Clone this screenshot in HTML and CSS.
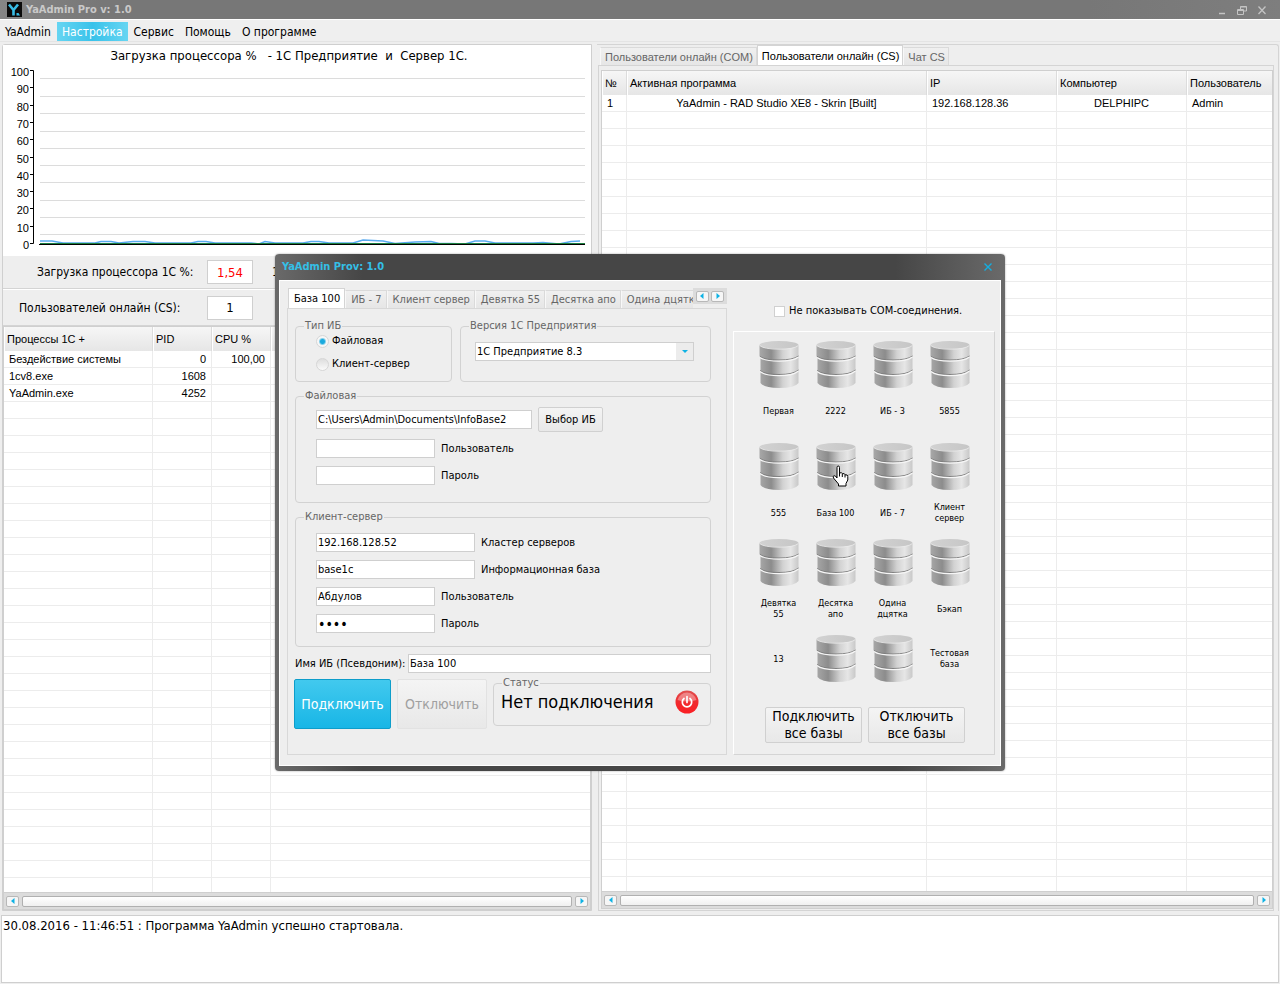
FILE: index.html
```html
<!DOCTYPE html>
<html lang="ru">
<head>
    <meta charset="UTF-8">
    <meta name="viewport" content="width=device-width, initial-scale=1.0">
    <title>YaAdmin Pro</title>
    <link rel="stylesheet" href="styles.css">
</head>
<body>
    <!-- Общие иконки -->
    <svg class="sprite" width="0" height="0" aria-hidden="true">
        <defs>
            <linearGradient id="metal" x1="0" x2="1" y1="0" y2="0">
                <stop offset="0" stop-color="#a8a8a8"/>
                <stop offset="0.3" stop-color="#8c8c8c"/>
                <stop offset="0.6" stop-color="#d2d2d2"/>
                <stop offset="0.8" stop-color="#e6e6e6"/>
                <stop offset="1" stop-color="#c8c8c8"/>
            </linearGradient>
            <linearGradient id="lid" x1="0" x2="1" y1="0" y2="0">
                <stop offset="0" stop-color="#d2d2d2"/>
                <stop offset="1" stop-color="#c6c6c6"/>
            </linearGradient>
            <linearGradient id="red" x1="0" x2="0" y1="0" y2="1">
                <stop offset="0" stop-color="#e05050"/>
                <stop offset="0.5" stop-color="#f02a2e"/>
                <stop offset="1" stop-color="#fb1f24"/>
            </linearGradient>
        </defs>
        <symbol id="db" viewBox="0 0 40 50">
            <path d="M0.500 5 H39.500 V43 Q36 48 20 48 Q5 48 1.500 43 V18 L0.500 16 Z" fill="url(#metal)"/>
            <path d="M1 16.500 Q6 20 20 20 Q34 20 39.500 16 M1 30.500 Q6 34.500 20 34.500 Q34 34.500 39.500 30" fill="none" stroke="#7c7c7c" stroke-width="0.900"/>
            <path d="M1 17.500 Q6 21.200 20 21.200 Q34 21.200 39.500 17 M1 31.500 Q6 35.700 20 35.700 Q34 35.700 39.500 31" fill="none" stroke="#f6f6f6" stroke-width="1.200"/>
            <ellipse cx="20" cy="5" rx="19.500" ry="4" fill="url(#lid)"/>
            <path d="M0.500 5.500 Q5 9.200 20 9.200 Q35 9.200 39.500 5.500" fill="none" stroke="#ececec" stroke-width="0.800"/>
        </symbol>
        <symbol id="left" viewBox="0 0 6 8"><path d="M4.500 1 V7 L1 4 Z" fill="#0eb2e4"/></symbol>
        <symbol id="right" viewBox="0 0 6 8"><path d="M1.500 1 V7 L5 4 Z" fill="#0eb2e4"/></symbol>
    </svg>

    <header class="titlebar">
        <svg class="logo" viewBox="0 0 15 15">
            <rect width="15" height="15" fill="#0b0b0b"/>
            <path d="M2 2.500 L6.500 8 L11 2.500 M6.500 8 V13.500" fill="none" stroke="#39bde6" stroke-width="2.600"/>
            <path d="M9.500 11 h2 l1.500 2.500 h-3.500 z" fill="#39bde6"/>
        </svg>
        <h1>YaAdmin Pro v: 1.0</h1>
        <div class="win-buttons">
            <button aria-label="Свернуть"><svg viewBox="0 0 10 10"><path d="M2 8.500 H8" stroke="#c4c4c4" stroke-width="1.500"/></svg></button>
            <button aria-label="Восстановить"><svg viewBox="0 0 10 10"><path d="M3.500 4 V1.500 H9.500 V6 H7 M3.500 2 H9.500 M0.500 4.500 H6.500 V9.500 H0.500 Z M0.500 5.500 H6.500" fill="none" stroke="#c4c4c4"/></svg></button>
            <button aria-label="Закрыть"><svg viewBox="0 0 10 10"><path d="M1.500 1.500 L8.500 9 M8.500 1.500 L1.500 9" stroke="#c4c4c4" stroke-width="1.300"/></svg></button>
        </div>
    </header>

    <nav class="menu">
        <button>YaAdmin</button>
        <button class="active">Настройка</button>
        <button>Сервис</button>
        <button>Помощь</button>
        <button>О программе</button>
    </nav>

    <main class="workspace">
        <section class="left">
            <div class="chart">
                <svg viewBox="0 0 588 208" preserveAspectRatio="none">
                    <text x="286" y="14" id="chart-title">Загрузка процессора %&#160; &#160;- 1С Предприятие&#160; и&#160; Сервер 1С.</text>
                    <g class="scale">
                        <text x="26" y="30">100</text>
                        <text x="26" y="47">90</text>
                        <text x="26" y="65">80</text>
                        <text x="26" y="82">70</text>
                        <text x="26" y="99">60</text>
                        <text x="26" y="117">50</text>
                        <text x="26" y="134">40</text>
                        <text x="26" y="151">30</text>
                        <text x="26" y="168">20</text>
                        <text x="26" y="186">10</text>
                        <text x="26" y="203">0</text>
                    </g>
                    <path d="M27 24.500 H30.500 V197.500 H27 M27 41.500 H30 M27 59.500 H30 M27 76.500 H30 M27 93.500 H30 M27 111.500 H30 M27 128.500 H30 M27 145.500 H30 M27 162.500 H30 M27 180.500 H30" fill="none" stroke="#000"/>
                    <path d="M37 32.500 H582 M37 50.500 H582 M37 67.500 H582 M37 85.500 H582 M37 102.500 H582 M37 119.500 H582 M37 136.500 H582 M37 154.500 H582 M37 171.500 H582 M37 188.500 H582" stroke="#dcdcdc"/>
                    <path d="M37 195 L49 195 L60 197 H92 L98 195.500 H108 L116 197 L130 195.500 H142 L152 197 H188 L195 195.500 H203 L212 197 H248 L256 198 L262 195.500 L272 197 H300 L308 195.500 H316 L326 197 H350 L360 194 L380 195 L392 197.500 L412 196 L428 195.500 L436 197.500 H448 L462 198 L472 195 H482 L492 197 H530 L540 196.500 L556 198 L568 195.500 L577 195" fill="none" stroke="#58aaf0" stroke-width="1.500"/>
                    <path d="M37 197.500 H582" stroke="#1c8040"/>
                    <path d="M36 198.500 H582" stroke="#000"/>
                </svg>
            </div>
            <div class="meter">
                <label for="cpu">Загрузка процессора 1С %:</label>
                <input id="cpu" class="hot" value="1,54" readonly>
                <span>1</span>
            </div>
            <div class="meter users">
                <label for="online">Пользователей онлайн (CS):</label>
                <input id="online" value="1" readonly>
            </div>
            <div class="grid-box">
                <table class="grid">
                    <colgroup><col class="c-proc"><col class="c-num"><col class="c-num"><col></colgroup>
                    <thead><tr><th>Процессы 1С +</th><th>PID</th><th>CPU %</th><th></th></tr></thead>
                    <tbody>
                        <tr><td>Бездействие системы</td><td class="num">0</td><td class="num">100,00</td><td></td></tr>
                        <tr><td>1cv8.exe</td><td class="num">1608</td><td></td><td></td></tr>
                        <tr><td>YaAdmin.exe</td><td class="num">4252</td><td></td><td></td></tr>
                        <tr class="filler"><td></td><td></td><td></td><td></td></tr>
                    </tbody>
                </table>
                <div class="scrollbar">
                    <button aria-label="Влево"><svg><use href="#left"/></svg></button>
                    <div class="thumb"></div>
                    <button aria-label="Вправо"><svg><use href="#right"/></svg></button>
                </div>
            </div>
        </section>

        <section class="right">
            <div class="tabs">
                <button>Пользователи онлайн (COM)</button>
                <button class="active">Пользователи онлайн (CS)</button>
                <button>Чат CS</button>
            </div>
            <div class="tab-page">
                <div class="grid-box">
                    <table class="grid">
                        <colgroup><col class="c-no"><col class="c-prog"><col class="c-ip"><col class="c-ip"><col></colgroup>
                        <thead><tr><th>№</th><th>Активная программа</th><th>IP</th><th>Компьютер</th><th>Пользователь</th></tr></thead>
                        <tbody>
                            <tr><td>1</td><td class="mid">YaAdmin - RAD Studio XE8 - Skrin [Built]</td><td>192.168.128.36</td><td class="mid">DELPHIPC</td><td>Admin</td></tr>
                            <tr class="filler"><td></td><td></td><td></td><td></td><td></td></tr>
                        </tbody>
                    </table>
                    <div class="scrollbar">
                        <button aria-label="Влево"><svg><use href="#left"/></svg></button>
                        <div class="thumb"></div>
                        <button aria-label="Вправо"><svg><use href="#right"/></svg></button>
                    </div>
                </div>
            </div>
        </section>
    </main>

    <footer class="log">30.08.2016 - 11:46:51 : Программа YaAdmin успешно стартовала.</footer>

    <!-- Окно настройки баз -->
    <div class="dialog" role="dialog" aria-labelledby="dialog-title">
        <div class="dialog-title">
            <h2 id="dialog-title">YaAdmin Prov: 1.0</h2>
            <button aria-label="Закрыть"><svg viewBox="0 0 10 10"><path d="M1.500 1.500 L8.500 8.500 M8.500 1.500 L1.500 8.500" stroke="#14aee0" stroke-width="1.400"/></svg></button>
        </div>
        <div class="dialog-body">
            <div class="settings">
                <div class="base-tabs">
                    <div class="tabs">
                        <button class="active">База 100</button>
                        <button>ИБ - 7</button>
                        <button>Клиент сервер</button>
                        <button>Девятка 55</button>
                        <button>Десятка апо</button>
                        <button>Одина дцятка</button>
                    </div>
                    <div class="tab-nav">
                        <button aria-label="Назад"><svg><use href="#left"/></svg></button>
                        <button aria-label="Вперёд"><svg><use href="#right"/></svg></button>
                    </div>
                </div>
                <form class="pane" onsubmit="return false">
                    <div class="top-groups">
                        <fieldset class="kind">
                            <legend>Тип ИБ</legend>
                            <label><input type="radio" name="kind" checked> Файловая</label>
                            <label><input type="radio" name="kind"> Клиент-сервер</label>
                        </fieldset>
                        <fieldset class="version">
                            <legend>Версия 1С Предприятия</legend>
                            <div class="combo">
                                <select aria-label="Версия 1С Предприятия"><option>1С Предприятие 8.3</option></select>
                            </div>
                        </fieldset>
                    </div>
                    <fieldset class="file-group">
                        <legend>Файловая</legend>
                        <div class="field path">
                            <input class="box wide" aria-label="Путь к базе" value="C:\Users\Admin\Documents\InfoBase2">
                            <button class="btn">Выбор ИБ</button>
                        </div>
                        <div class="field"><input class="box short" id="f-user"><label for="f-user">Пользователь</label></div>
                        <div class="field"><input class="box short" id="f-pass" type="password"><label for="f-pass">Пароль</label></div>
                    </fieldset>
                    <fieldset class="server-group">
                        <legend>Клиент-сервер</legend>
                        <div class="field"><input class="box" id="s-host" value="192.168.128.52"><label for="s-host">Кластер серверов</label></div>
                        <div class="field"><input class="box" id="s-base" value="base1c"><label for="s-base">Информационная база</label></div>
                        <div class="field"><input class="box short" id="s-user" value="Абдулов"><label for="s-user">Пользователь</label></div>
                        <div class="field"><input class="box short" id="s-pass" type="password" value="1234"><label for="s-pass">Пароль</label></div>
                    </fieldset>
                    <div class="alias">
                        <label for="alias">Имя ИБ (Псевдоним):</label>
                        <input class="box" id="alias" value="База 100">
                    </div>
                    <div class="actions">
                        <button class="btn connect">Подключить</button>
                        <button class="btn disconnect" disabled>Отключить</button>
                        <fieldset class="status">
                            <legend>Статус</legend>
                            <span>Нет подключения</span>
                            <svg viewBox="0 0 24 24">
                                <circle cx="12" cy="12" r="11.500" fill="url(#red)"/>
                                <path d="M2.500 10 A9.800 9.800 0 0 1 21.500 10 Q12 13 2.500 10 Z" fill="#fff" opacity="0.350"/>
                                <path d="M9 8.500 A4.700 4.700 0 1 0 15 8.500 M12 6.500 V12.500" fill="none" stroke="#fff" stroke-width="1.700" stroke-linecap="round"/>
                            </svg>
                        </fieldset>
                    </div>
                </form>
            </div>

            <div class="bases">
                <label class="no-com"><input type="checkbox"> Не показывать COM-соединения.</label>
                <div class="bases-box">
                    <div class="base-list">
                        <div class="base"><svg><use href="#db"/></svg><span>Первая</span></div>
                        <div class="base"><svg><use href="#db"/></svg><span>2222</span></div>
                        <div class="base"><svg><use href="#db"/></svg><span>ИБ - 3</span></div>
                        <div class="base"><svg><use href="#db"/></svg><span>5855</span></div>
                        <div class="base"><svg><use href="#db"/></svg><span>555</span></div>
                        <div class="base">
                            <svg><use href="#db"/></svg><span>База 100</span>
                            <svg class="hand" viewBox="0 0 17 22">
                                <path d="M5 13 V2.500 Q5 1 6.300 1 Q7.500 1 7.500 2.500 V8 Q10 7 10.300 8.700 Q12.800 8 13 9.800 Q15.800 9.300 15.800 11.500 V15 L14 18.500 V21 H6.500 V19 L1.500 13 Q0.500 11 2.200 10.700 Q3.500 10.700 5 13 Z" fill="#fff" stroke="#000"/>
                                <path d="M7.500 8 V11.500 M10.300 9 V12 M13 10 V12.500" stroke="#000"/>
                            </svg>
                        </div>
                        <div class="base"><svg><use href="#db"/></svg><span>ИБ - 7</span></div>
                        <div class="base"><svg><use href="#db"/></svg><span>Клиент сервер</span></div>
                        <div class="base"><svg><use href="#db"/></svg><span>Девятка 55</span></div>
                        <div class="base"><svg><use href="#db"/></svg><span>Десятка апо</span></div>
                        <div class="base"><svg><use href="#db"/></svg><span>Одина дцятка</span></div>
                        <div class="base"><svg><use href="#db"/></svg><span>Бэкап</span></div>
                        <div class="base empty"><span>13</span></div>
                        <div class="base"><svg><use href="#db"/></svg></div>
                        <div class="base"><svg><use href="#db"/></svg></div>
                        <div class="base empty"><span>Тестовая база</span></div>
                    </div>
                    <div class="all-buttons">
                        <button class="btn">Подключить<br>все базы</button>
                        <button class="btn">Отключить<br>все базы</button>
                    </div>
                </div>
            </div>
        </div>
    </div>
</body>
</html>
```
FILE: styles.css
```css
* {
    box-sizing: border-box;
}
body {
    margin: 0;
    height: 100vh;
    display: flex;
    flex-direction: column;
    background: #eee;
    color: #000;
    font-family: "DejaVu Sans Condensed", "Noto Sans", sans-serif;
    font-size: 11px;
    line-height: 14px;
}
button, input, select {
    font: inherit;
    color: inherit;
    margin: 0;
    padding: 0;
    border: none;
    background: none;
}
svg {
    display: block;
}
.sprite {
    position: absolute;
}

/* Заголовок окна */
.titlebar {
    height: 19px;
    flex: none;
    display: flex;
    align-items: center;
    gap: 4px;
    padding: 0 13px 0 7px;
    background: linear-gradient(90deg, #868686, #777 8%, #777 85%, #7e7e7e);
}
.titlebar .logo {
    width: 15px;
    height: 15px;
}
.titlebar h1 {
    margin: 0;
    font-size: 11px;
    color: #c9c9c9;
}
.win-buttons {
    margin-left: auto;
    display: flex;
    gap: 10px;
}
.win-buttons svg {
    width: 10px;
    height: 10px;
}

.menu {
    height: 23px;
    flex: none;
    display: flex;
    gap: 1px;
    padding-top: 2px;
    border-top: 1px solid #fff;
    border-bottom: 1px solid #e4e4e4;
    background: #efefef;
    font-size: 12px;
}
.menu button {
    padding: 0 5px;
}
.menu .active {
    color: #fff;
    background: linear-gradient(90deg, #66d5f2, #39c2ea 50%, #66d5f2);
}

.workspace {
    flex: 1;
    min-height: 0;
    display: flex;
    gap: 5px;
    padding: 2px 1px 4px 2px;
}
.left {
    width: 590px;
    flex: none;
    display: flex;
    flex-direction: column;
    border: 1px solid #cfcfcf;
    border-radius: 3px 0 0 0;
}
.chart {
    height: 210px;
    padding-top: 1px;
    background: #fff;
}
.chart svg {
    width: 100%;
    height: 208px;
}
#chart-title {
    font-size: 13px;
    text-anchor: middle;
}
.scale {
    font-family: "Liberation Sans", sans-serif;
    font-size: 11px;
    text-anchor: end;
}
.meter {
    height: 34px;
    display: flex;
    align-items: center;
    gap: 7px;
    padding-left: 34px;
    border-top: 1px solid #fff;
    border-bottom: 1px solid #d4d4d4;
    font-size: 12px;
    white-space: nowrap;
}
.meter label {
    width: 163px;
}
.meter input {
    width: 46px;
    height: 24px;
    border: 1px solid #cfcfcf;
    background: #fff;
    text-align: center;
    font-size: 13px;
}
.meter .hot {
    color: #f00;
}
.meter span {
    margin-left: 12px;
}
.users {
    height: 37px;
    padding-left: 16px;
    gap: 17px;
}
.users label {
    width: 171px;
}

/* Таблицы */
.grid-box {
    flex: 1;
    min-height: 0;
    display: flex;
    flex-direction: column;
    border: 1px solid #cfcfcf;
    background: #fff;
}
.grid {
    flex: 1;
    width: 100%;
    table-layout: fixed;
    border-collapse: separate;
    border-spacing: 0;
    font-family: "Liberation Sans", sans-serif;
}
.grid th {
    height: 24px;
    padding: 0 2px;
    text-align: left;
    font-weight: normal;
    white-space: nowrap;
    border-right: 1px solid #dcdcdc;
    border-left: 1px solid #fff;
    background: linear-gradient(#f6f6f6, #e6e6e6);
}
.grid td {
    height: 17px;
    padding: 1px 5px 0;
    line-height: 15px;
    white-space: nowrap;
    border-right: 1px solid #ececec;
    border-bottom: 1px solid #ececec;
}
.grid th:last-child, .grid td:last-child {
    border-right: none;
}
.grid .num {
    text-align: right;
}
.grid .mid {
    text-align: center;
}
.grid .filler td {
    height: auto;
    border-bottom: none;
    background: repeating-linear-gradient(#fff 0, #fff 16px, #ececec 16px, #ececec 17px);
}
.c-proc {
    width: 149px;
}
.c-num {
    width: 59px;
}
.c-no {
    width: 25px;
}
.c-prog {
    width: 300px;
}
.c-ip {
    width: 130px;
}

.scrollbar {
    height: 17px;
    display: flex;
    align-items: center;
    gap: 3px;
    padding: 0 2px;
    border-top: 1px solid #cfcfcf;
    background: #dcdcdc;
}
.scrollbar button, .tab-nav button {
    width: 13px;
    height: 11px;
    display: flex;
    align-items: center;
    justify-content: center;
    border: 1px solid #b8b8b8;
    border-radius: 2px;
    background: #f6f6f6;
}
.scrollbar svg, .tab-nav svg {
    width: 6px;
    height: 8px;
}
.thumb {
    flex: 1;
    height: 11px;
    border: 1px solid #b0b0b0;
    border-radius: 2px;
    background: linear-gradient(#fff, #f0f0f0);
}

/* Вкладки */
.tabs {
    display: flex;
    align-items: flex-end;
}
.tabs button {
    flex: none;
    height: 18px;
    padding: 0 4px 0 5px;
    white-space: nowrap;
    color: #666;
    border: 1px solid #dadada;
    border-left-color: #f8f8f8;
    border-bottom: none;
    background: linear-gradient(#f0f0f0, #e6e6e6);
}
.tabs .active {
    height: 20px;
    color: #000;
    border-color: #d4d4d4;
    background: #fff;
}
.right {
    flex: 1;
    min-width: 0;
    display: flex;
    flex-direction: column;
    padding: 0 4px 0 1px;
    border: 1px solid #d4d4d4;
    border-left: none;
    border-bottom: none;
    border-radius: 0 3px 0 0;
}
.right .tabs {
    padding-left: 2px;
    font-family: "Liberation Sans", sans-serif;
}
.right .tabs button {
    padding: 0 3px 0 4px;
}
.tab-page {
    flex: 1;
    min-height: 0;
    display: flex;
    padding: 4px 0 1px 2px;
    border: 1px solid #d4d4d4;
}

.log {
    height: 68px;
    flex: none;
    margin: 0 1px 1px;
    padding: 3px 1px;
    border: 1px solid #cfcfcf;
    background: #fff;
    font-size: 13px;
}

/* Диалог поверх главного окна */
.dialog {
    position: absolute;
    top: 254px;
    left: 50%;
    width: 730px;
    margin-left: -365px;
    padding: 0 4px 5px;
    border-radius: 4px;
    background: linear-gradient(90deg, #6a6a6a, #464646 12%, #464646 85%, #6a6a6a);
    box-shadow: 0 0 2px rgba(0, 0, 0, 0.4);
}
.dialog-title {
    height: 26px;
    display: flex;
    align-items: center;
    justify-content: space-between;
    padding: 0 8px 0 3px;
}
.dialog-title h2 {
    margin: 0;
    font-size: 11px;
    color: #34bfe6;
}
.dialog-title svg {
    width: 10px;
    height: 10px;
}
.dialog-body {
    display: flex;
    gap: 6px;
    padding: 7px 5px 10px 7px;
    border: 1px solid #fff;
    background: #eee;
}
.settings {
    width: 440px;
}
.base-tabs {
    display: flex;
    height: 20px;
    padding-left: 1px;
}
.base-tabs .tabs {
    flex: 1;
    min-width: 0;
    overflow: hidden;
}
.tab-nav {
    width: 34px;
    height: 16px;
    display: flex;
    align-items: center;
    justify-content: space-evenly;
    background: #dcdcdc;
}
.pane {
    display: flex;
    flex-direction: column;
    gap: 7px;
    padding: 10px 15px 25px 7px;
    border: 1px solid #d8d8d8;
}
fieldset {
    margin: 0;
    padding: 0;
    min-width: 0;
    border: 1px solid #d2d2d2;
    border-radius: 4px;
}
legend {
    margin-left: 8px;
    padding: 0 1px;
    color: #666;
}
.top-groups {
    display: flex;
    gap: 8px;
}
.kind {
    width: 157px;
    height: 63px;
}
.kind label {
    height: 16px;
    display: flex;
    align-items: center;
    gap: 3px;
    margin: 0 0 7px 20px;
}
.kind input {
    appearance: none;
    width: 13px;
    height: 13px;
    border: 1px solid #d6d6d6;
    border-radius: 50%;
    background: linear-gradient(#dedede, #fafafa);
}
.kind input:checked {
    background: radial-gradient(circle, #1aaade 0, #1aaade 2px, #f6f6f6 4px);
}
.version {
    flex: 1;
    padding-top: 9px;
}
.combo {
    position: relative;
    width: 219px;
    margin-left: 14px;
}
.combo select {
    appearance: none;
    display: block;
    width: 100%;
    height: 19px;
    padding-left: 1px;
    border: 1px solid #cfcfcf;
    border-radius: 0;
    background: linear-gradient(90deg, #fff 200px, #ececec 200px);
}
.combo::after {
    content: "";
    position: absolute;
    top: 8px;
    right: 6px;
    border: 3px solid transparent;
    border-top-color: #0eb2e4;
    border-bottom: none;
}
.box {
    width: 159px;
    height: 19px;
    padding: 0 1px;
    border: 1px solid #cfcfcf;
    background: #fff;
}
.box[type="password"] {
    font-size: 14px;
}
.short {
    width: 119px;
}
.wide {
    width: 216px;
}
.field {
    display: flex;
    align-items: center;
    gap: 6px;
    margin: 0 0 8px 20px;
}
.file-group {
    height: 114px;
    padding-top: 4px;
}
.path {
    margin-bottom: 7px;
}
.server-group {
    height: 137px;
    padding-top: 9px;
}
.btn {
    border: 1px solid #d0d0d0;
    border-radius: 2px;
    background: linear-gradient(#f4f4f4, #e8e8e8);
}
.path .btn {
    width: 65px;
    height: 25px;
}
.alias {
    display: flex;
    align-items: center;
}
.alias label {
    width: 113px;
}
.alias .box {
    flex: 1;
}
.actions {
    display: flex;
    align-items: flex-end;
    gap: 6px;
    height: 53px;
    margin: -4px 0 0 -1px;
}
.actions .btn {
    height: 50px;
    font-size: 14px;
}
.connect {
    width: 97px;
    color: #fff;
    border-color: #0d9dca;
    background: linear-gradient(#42c9ee, #18b6e6);
}
.disconnect {
    width: 90px;
    color: #a0a0a0;
    border-color: #e2e2e2;
}
.status {
    flex: 1;
    height: 50px;
    align-self: flex-start;
    padding: 0 11px 0 7px;
    display: flex;
    justify-content: space-between;
    align-items: flex-start;
    font-size: 18px;
    line-height: 24px;
}
.status legend {
    margin-left: 1px;
    font-size: 11px;
    line-height: 14px;
}
.status svg {
    width: 24px;
    height: 24px;
}

.bases {
    flex: 1;
    display: flex;
    flex-direction: column;
    justify-content: space-between;
}
.no-com {
    display: flex;
    align-items: center;
    gap: 4px;
    margin: 16px 0 0 41px;
}
.no-com input {
    appearance: none;
    width: 11px;
    height: 11px;
    border: 1px solid #d0d0d0;
    background: #fff;
}
.bases-box {
    height: 424px;
    padding: 8px 0 0 16px;
    border: 1px solid #d4d4d4;
    border-top-color: #fff;
    border-left-color: #fff;
}
.base-list {
    display: grid;
    grid-template-columns: repeat(4, 57px);
    grid-template-rows: 102px 96px 96px 50px;
}
.base {
    position: relative;
    display: flex;
    flex-direction: column;
    align-items: center;
    font-size: 9px;
    line-height: 11px;
    text-align: center;
}
.base svg {
    width: 40px;
    height: 50px;
}
.base span {
    width: 46px;
    height: 42px;
    display: flex;
    align-items: center;
    justify-content: center;
}
.base.empty {
    justify-content: center;
}
.base .hand {
    position: absolute;
    top: 23px;
    left: 25px;
    width: 17px;
    height: 22px;
}
.all-buttons {
    display: flex;
    gap: 6px;
    margin: 23px 0 0 15px;
}
.all-buttons .btn {
    width: 97px;
    height: 36px;
    font-size: 14px;
    line-height: 17px;
}
```
